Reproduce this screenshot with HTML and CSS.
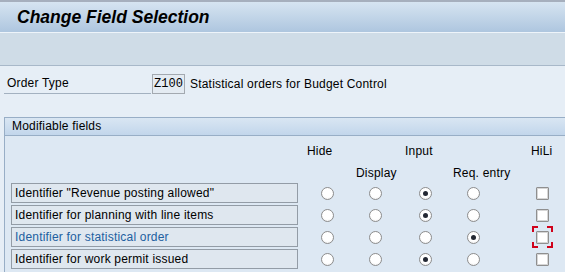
FILE: index.html
```html
<!DOCTYPE html>
<html lang="en">
<head>
    <meta charset="UTF-8">
    <title>Change Field Selection</title>
    <link rel="stylesheet" href="styles.css">
</head>
<body>
    <div class="screen">
        <div class="titlebar">
            <h1 class="title">Change Field Selection</h1>
        </div>
        <div class="toolbar"></div>

        <div class="content">
            <div class="order-row">
                <span class="order-label">Order Type</span>
                <span class="order-code">Z100</span>
                <span class="order-text">Statistical orders for Budget Control</span>
            </div>

            <div class="group">
                <div class="group-title">Modifiable fields</div>
                <div class="group-body">
                    <div class="heads heads-top">
                        <span class="head-hide">Hide</span>
                        <span class="head-input">Input</span>
                        <span>HiLi</span>
                    </div>
                    <div class="heads heads-bottom">
                        <span class="head-display">Display</span>
                        <span>Req. entry</span>
                    </div>

                    <!-- field rows -->
                    <div class="field-row">
                        <div class="field">Identifier "Revenue posting allowed"</div>
                        <div class="cell"><span class="radio"></span></div>
                        <div class="cell"><span class="radio"></span></div>
                        <div class="cell"><span class="radio on"></span></div>
                        <div class="cell"><span class="radio"></span></div>
                        <div class="cell"><span class="check"></span></div>
                    </div>
                    <div class="field-row">
                        <div class="field">Identifier for planning with line items</div>
                        <div class="cell"><span class="radio"></span></div>
                        <div class="cell"><span class="radio"></span></div>
                        <div class="cell"><span class="radio on"></span></div>
                        <div class="cell"><span class="radio"></span></div>
                        <div class="cell"><span class="check"></span></div>
                    </div>
                    <div class="field-row">
                        <div class="field field-hili">Identifier for statistical order</div>
                        <div class="cell"><span class="radio"></span></div>
                        <div class="cell"><span class="radio"></span></div>
                        <div class="cell"><span class="radio"></span></div>
                        <div class="cell"><span class="radio on"></span></div>
                        <div class="cell">
                            <span class="check"></span>
                            <svg class="focus-frame" width="21" height="22" viewBox="0 0 21 22">
                                <path d="M1 6V1H6M15 1H20V6M20 16V21H15M6 21H1V16" fill="none" stroke="#d0021b" stroke-width="2"/>
                            </svg>
                        </div>
                    </div>
                    <div class="field-row">
                        <div class="field">Identifier for work permit issued</div>
                        <div class="cell"><span class="radio"></span></div>
                        <div class="cell"><span class="radio"></span></div>
                        <div class="cell"><span class="radio on"></span></div>
                        <div class="cell"><span class="radio"></span></div>
                        <div class="cell"><span class="check"></span></div>
                    </div>
                </div>
            </div>
        </div>
    </div>
</body>
</html>
```

FILE: styles.css
```css
body {
    margin: 0;
    font-family: 'Liberation Sans', Arial, sans-serif;
    font-size: 12px;
    letter-spacing: 0.2px;
    color: #000000;
    background: #e6eef6;
}

.screen {
    width: 565px;
    height: 272px;
    overflow: hidden;
    background: #e6eef6;
}

.titlebar {
    height: 30px;
    border-top: 2px solid #a6afbd;
    background: linear-gradient(#d6e4f1, #aec6df);
    display: flex;
    align-items: center;
}

.title {
    margin: 0 0 0 17px;
    font-size: 17.5px;
    font-weight: bold;
    font-style: italic;
    letter-spacing: 0;
    color: #000000;
}

.toolbar {
    height: 32px;
    border-top: 1px solid #eef4fa;
    border-bottom: 1px solid #a8b8c9;
    background: #cfdce7;
}

.content {
    padding-top: 8px;
}

.order-row {
    display: flex;
    align-items: flex-end;
    height: 20px;
    padding-left: 4px;
}

.order-label {
    width: 144px;
    padding-left: 3px;
    height: 19px;
    line-height: 18px;
    border-bottom: 1px solid #a3b1c0;
}

.order-code {
    width: 31px;
    height: 18px;
    margin-left: 1px;
    border: 1px solid #a3a9b0;
    background: #e4ebf2;
    font: 12px/18px 'Liberation Mono', monospace;
    letter-spacing: 0;
    text-align: center;
    align-self: flex-start;
}

.order-text {
    margin-left: 5px;
    line-height: 18px;
    height: 19px;
}

.group {
    margin: 23px 0 0 4px;
    border-top: 1px solid #98aec6;
    border-left: 1px solid #98aec6;
    background: #dde8f3;
}

.group-title {
    height: 17px;
    line-height: 16px;
    padding-left: 7px;
    border-bottom: 1px solid #98aec6;
    background: linear-gradient(#d9e6f3, #c2d6eb);
}

.group-body {
    padding: 7px 0 0 6px;
    height: 140px;
}

.heads {
    display: flex;
    height: 16px;
    line-height: 16px;
}

.heads-top {
    padding-left: 296px;
}

.heads-bottom {
    margin-top: 6px;
    margin-bottom: 2px;
    padding-left: 345px;
}

.head-hide {
    width: 98px;
}

.head-input {
    width: 126px;
}

.head-display {
    width: 97px;
}

.field-row {
    display: grid;
    grid-template-columns: 287px 58px 38px 62px 34px 104px;
    height: 20px;
    margin-bottom: 2px;
    align-items: center;
}

.field {
    height: 18px;
    line-height: 18px;
    padding-left: 3px;
    border: 1px solid #939ca6;
    background: #dfe7ef;
    white-space: nowrap;
    overflow: hidden;
}

.field-hili {
    color: #22609f;
}

.cell {
    position: relative;
    display: flex;
    justify-content: center;
    align-items: center;
    height: 20px;
}

.radio {
    width: 11px;
    height: 11px;
    border: 1px solid #8d8d8d;
    border-radius: 50%;
    background: radial-gradient(circle at 50% 40%, #ffffff 55%, #e4e4e4);
    display: flex;
    justify-content: center;
    align-items: center;
}

.radio.on::after {
    content: '';
    width: 5px;
    height: 5px;
    border-radius: 50%;
    background: #232833;
}

.check {
    width: 11px;
    height: 11px;
    border: 1px solid #8f8f8f;
    box-shadow: inset 0 0 0 1px #d6d6d6;
    border-radius: 1px;
    background: #ffffff;
}

.focus-frame {
    position: absolute;
    left: 42px;
    top: -1px;
}
```
